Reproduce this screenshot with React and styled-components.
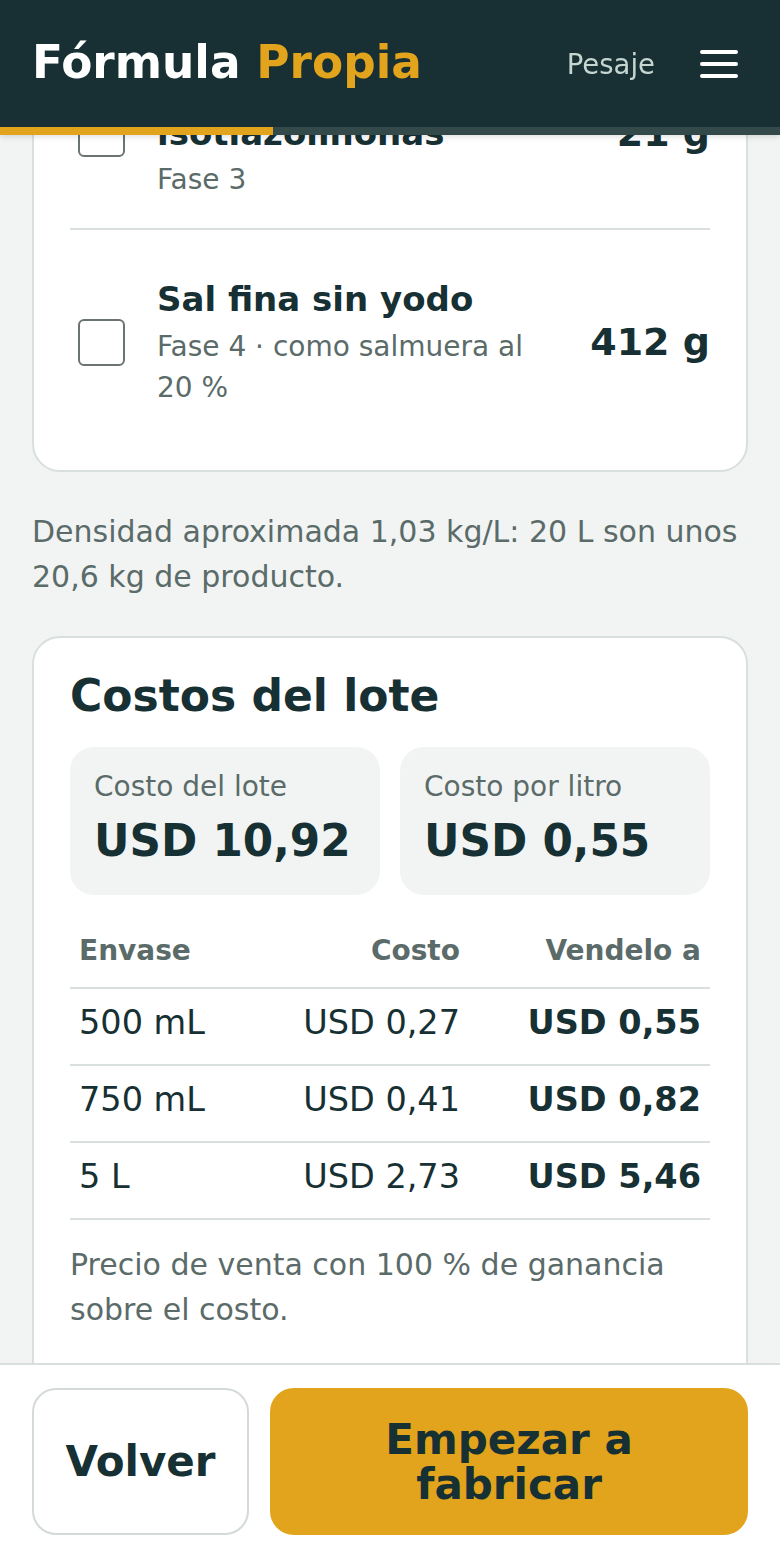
import React from "react";
import styled, { createGlobalStyle } from "styled-components";

const ink = "#163033";
const muted = "#5b6b69";
const line = "#d8dfdd";
const gold = "#e2a41c";

const GlobalStyle = createGlobalStyle`
  * { box-sizing: border-box; }
  html, body { margin: 0; padding: 0; }
  body {
    background: #f1f4f3;
    color: ${ink};
    font-family: "DejaVu Sans", "Liberation Sans", sans-serif;
  }
`;

const TopBar = styled.header`
  position: fixed;
  top: 0;
  left: 0;
  right: 0;
  z-index: 10;
  background: #183033;
  box-shadow: 0 2px 6px rgba(0, 0, 0, 0.12);
`;

const TopRow = styled.div`
  height: 127px;
  padding: 0 32px;
  display: flex;
  align-items: center;
  justify-content: space-between;
`;

const Brand = styled.div`
  font-size: 45.4px;
  line-height: 1.2;
  font-weight: 700;
  color: #ffffff;
  white-space: nowrap;
`;

const BrandAccent = styled.span`
  color: ${gold};
`;

const Nav = styled.nav`
  display: flex;
  align-items: center;
  gap: 45px;
`;

const NavLink = styled.a`
  font-size: 27.5px;
  color: #c5d5d0;
  text-decoration: none;
`;

const MenuButton = styled.button`
  width: 48px;
  height: 52px;
  padding: 0;
  border: 0;
  background: transparent;
  display: flex;
  align-items: center;
  justify-content: flex-start;
`;

const Progress = styled.div`
  height: 8px;
  background: #33494a;
`;

const ProgressFill = styled.div`
  height: 100%;
  background: ${gold};
`;

const Main = styled.main`
  display: flex;
  flex-direction: column;
  gap: 37px;
  padding: 0 32px 166px;
`;

const Card = styled.section`
  background: #ffffff;
  border: 2px solid ${line};
  border-radius: 28px;
  padding: ${(p) => p.pad || "36px"};
  margin-top: ${(p) => p.mt || "0"};
`;

const ItemRow = styled.div`
  display: grid;
  grid-template-columns: 47px 1fr auto;
  column-gap: 32px;
  align-items: center;
  padding: 47px 0 28px 8px;

  & + & {
    border-top: 2px solid ${line};
  }
`;

const Check = styled.span`
  width: 47px;
  height: 47px;
  border: 2px solid #6b7472;
  border-radius: 6px;
  background: #ffffff;
`;

const ItemName = styled.div`
  font-size: 34px;
  line-height: 1.3;
  font-weight: 700;
  color: ${ink};
`;

const ItemMeta = styled.div`
  margin-top: 4px;
  font-size: 28px;
  line-height: 41px;
  color: ${muted};
`;

const Amount = styled.div`
  font-size: 38px;
  line-height: 1.2;
  font-weight: 700;
  color: ${ink};
  white-space: nowrap;
`;

const Note = styled.p`
  margin: 0;
  font-size: 30px;
  line-height: 45px;
  color: ${muted};
  margin-top: ${(p) => p.mt || "0"};
`;

const CardTitle = styled.h2`
  margin: 0 0 25px;
  font-size: 44px;
  line-height: 1.2;
  font-weight: 700;
  color: ${ink};
`;

const Stats = styled.div`
  display: grid;
  grid-template-columns: 1fr 1fr;
  gap: 20px;
`;

const Stat = styled.div`
  background: #f1f4f3;
  border-radius: 24px;
  padding: 20px 24px 28px;
`;

const StatLabel = styled.div`
  font-size: 28px;
  line-height: 40px;
  color: ${muted};
`;

const StatValue = styled.div`
  margin-top: 8px;
  font-size: 43.7px;
  line-height: 52px;
  font-weight: 700;
  color: ${ink};
  white-space: nowrap;
`;

const Table = styled.table`
  width: 100%;
  margin-top: 23px;
  border-collapse: collapse;
  table-layout: fixed;
`;

const Th = styled.th`
  width: ${(p) => p.w || "auto"};
  text-align: ${(p) => p.align || "left"};
  padding: 15px 9px 17px;
  font-size: 28px;
  line-height: 36.4px;
  font-weight: 700;
  color: ${muted};
  border-bottom: 2px solid ${line};
  white-space: nowrap;
`;

const Td = styled.td`
  text-align: ${(p) => p.align || "left"};
  padding: 14px 9px 21px;
  font-size: 33.5px;
  line-height: 40px;
  font-weight: ${(p) => (p.strong ? 700 : 400)};
  color: ${ink};
  border-bottom: 2px solid ${line};
  white-space: nowrap;
`;

const BottomBar = styled.footer`
  position: fixed;
  left: 0;
  right: 0;
  bottom: 0;
  z-index: 10;
  background: #ffffff;
  border-top: 2px solid ${line};
  padding: 23px 32px 25px;
  display: flex;
  gap: 21px;
`;

const Button = styled.button`
  height: 147px;
  border-radius: 24px;
  font-family: inherit;
  font-size: 42px;
  line-height: 45px;
  font-weight: 700;
  color: ${ink};
  cursor: pointer;
  flex: ${(p) => (p.primary ? "1" : "0 0 217px")};
  background: ${(p) => (p.primary ? gold : "#ffffff")};
  border: 2px solid ${(p) => (p.primary ? gold : "#d3dad8")};
  padding: 0 20px;
`;

const items = [
  { name: "Conservante isotiazolinonas", meta: "Fase 3", amount: "21 g" },
  { name: "Sal fina sin yodo", meta: "Fase 4 · como salmuera al 20 %", amount: "412 g" },
];

const packs = [
  { size: "500 mL", cost: "USD 0,27", sell: "USD 0,55" },
  { size: "750 mL", cost: "USD 0,41", sell: "USD 0,82" },
  { size: "5 L", cost: "USD 2,73", sell: "USD 5,46" },
];

const MenuIcon = () => (
  <svg width="38" height="28" viewBox="0 0 38 28" fill="none">
    <rect x="0" y="0" width="38" height="4" rx="2" fill="#ffffff" />
    <rect x="0" y="12" width="38" height="4" rx="2" fill="#ffffff" />
    <rect x="0" y="24" width="38" height="4" rx="2" fill="#ffffff" />
  </svg>
);

export default function App() {
  return (
    <>
      <GlobalStyle />
      <TopBar>
        <TopRow>
          <Brand>
            Fórmula <BrandAccent>Propia</BrandAccent>
          </Brand>
          <Nav>
            <NavLink href="#pesaje">Pesaje</NavLink>
            <MenuButton aria-label="Menú">
              <MenuIcon />
            </MenuButton>
          </Nav>
        </TopRow>
        <Progress>
          <ProgressFill style={{ width: "35%" }} />
        </Progress>
      </TopBar>

      <Main>
        <Card pad="36px 36px 34px" mt="-18px">
          {items.map((it) => (
            <ItemRow key={it.name}>
              <Check role="checkbox" aria-checked="false" />
              <div>
                <ItemName>{it.name}</ItemName>
                <ItemMeta>{it.meta}</ItemMeta>
              </div>
              <Amount>{it.amount}</Amount>
            </ItemRow>
          ))}
        </Card>

        <Note>Densidad aproximada 1,03 kg/L: 20 L son unos 20,6 kg de producto.</Note>

        <Card pad="32px 36px 60px">
          <CardTitle>Costos del lote</CardTitle>
          <Stats>
            <Stat>
              <StatLabel>Costo del lote</StatLabel>
              <StatValue>USD 10,92</StatValue>
            </Stat>
            <Stat>
              <StatLabel>Costo por litro</StatLabel>
              <StatValue>USD 0,55</StatValue>
            </Stat>
          </Stats>
          <Table>
            <thead>
              <tr>
                <Th>Envase</Th>
                <Th align="right" w="200px">Costo</Th>
                <Th align="right" w="241px">Vendelo a</Th>
              </tr>
            </thead>
            <tbody>
              {packs.map((p) => (
                <tr key={p.size}>
                  <Td>{p.size}</Td>
                  <Td align="right">{p.cost}</Td>
                  <Td align="right" strong>{p.sell}</Td>
                </tr>
              ))}
            </tbody>
          </Table>
          <Note mt="22px">Precio de venta con 100 % de ganancia sobre el costo.</Note>
        </Card>
      </Main>

      <BottomBar>
        <Button>Volver</Button>
        <Button primary>Empezar a fabricar</Button>
      </BottomBar>
    </>
  );
}
